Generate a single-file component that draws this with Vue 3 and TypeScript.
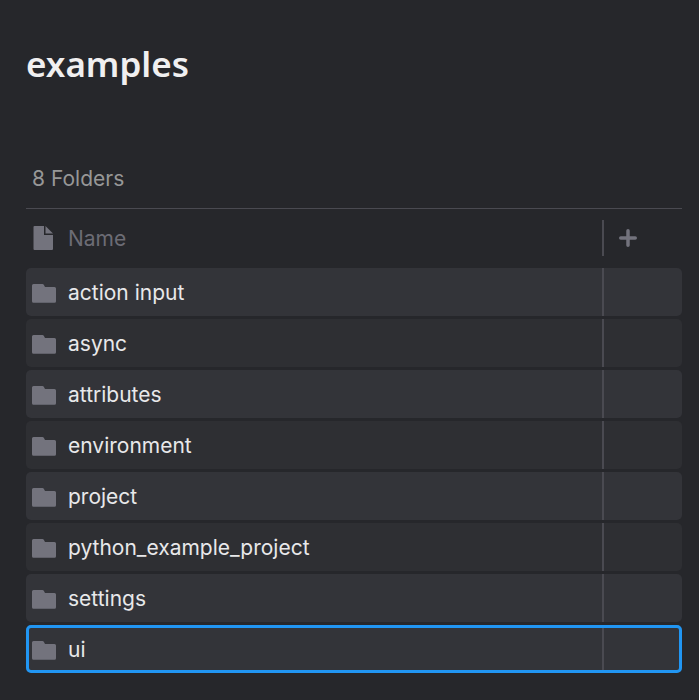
<script setup lang="ts">
import { computed, ref } from 'vue'

const title = 'examples'
const folders: string[] = [
  'action input',
  'async',
  'attributes',
  'environment',
  'project',
  'python_example_project',
  'settings',
  'ui',
]
const selected = ref('ui')
const summary = computed(() => `${folders.length} Folders`)
</script>

<template>
  <main class="page">
    <h1 class="title">{{ title }}</h1>
    <p class="summary">{{ summary }}</p>
    <table class="folders">
      <thead>
        <tr>
          <th scope="col" class="name-head">
            <div class="entry">
              <svg class="icon" viewBox="0 0 24 24" aria-hidden="true">
                <path d="M2.5 0H12V9H21V23Q21 24 20 24H2.5Q1.5 24 1.5 23V1Q1.5 0 2.5 0Z" />
                <path d="M13.5 0L21 7.5H13.5Z" />
              </svg>
              <span class="label">Name</span>
            </div>
          </th>
          <th class="add-head">
            <div class="add-cell">
              <button type="button" class="add" aria-label="Add column">
                <svg class="plus" viewBox="0 0 18 18" aria-hidden="true">
                  <path d="M9 1.75V16.25M1.75 9H16.25" />
                </svg>
              </button>
            </div>
          </th>
        </tr>
      </thead>
      <tbody>
        <tr
          v-for="name in folders"
          :key="name"
          :class="{ selected: name === selected }"
          @click="selected = name"
        >
          <td class="name">
            <a class="entry" href="#" @click.prevent>
              <svg class="icon" viewBox="0 0 24 24" aria-hidden="true">
                <path d="M1.5 4H10.5Q11.3 4 11.8 4.8L13 7H22.5Q24 7 24 8.5V21.3Q24 22.8 22.5 22.8H1.5Q0 22.8 0 21.3V5.5Q0 4 1.5 4Z" />
              </svg>
              <span class="label">{{ name }}</span>
            </a>
          </td>
          <td class="extra"></td>
        </tr>
      </tbody>
    </table>
  </main>
</template>

<style>
body {
  background: #26272b;
}
</style>

<style scoped>
.page {
  padding: 40px 17px 24px 26px;
  font-family: Inter, 'Liberation Sans', sans-serif;
  font-size: 21px;
  line-height: 28px;
  color: #e8e8ea;
}
.title {
  margin: 0;
  font-family: 'Noto Sans', sans-serif;
  font-size: 35px;
  font-weight: 600;
  line-height: 48px;
  color: #f0eff0;
}
.summary {
  margin: 77px 0 0;
  padding: 0 6px 15px;
  border-bottom: 1px solid #4a4a51;
  color: #979797;
}
.folders {
  width: 100%;
  table-layout: fixed;
  border-collapse: separate;
  border-spacing: 0 3px;
}
th,
td {
  padding: 0;
  text-align: left;
}
.name-head {
  padding: 8px 0 9px;
  font-weight: 400;
  color: #6c6c75;
}
.add-head {
  width: 80px;
  padding: 8px 0 9px;
}
.entry {
  display: flex;
  align-items: center;
  gap: 12px;
  padding: 0 6px;
  color: inherit;
  text-decoration: none;
}
.label {
  padding-top: 2px;
}
.icon {
  flex: none;
  width: 24px;
  height: 24px;
  fill: #73737d;
}
.add-cell {
  display: flex;
  align-items: center;
  height: 36px;
  padding-left: 15px;
  border-left: 2px solid #4a4a51;
}
.add {
  display: flex;
  padding: 0;
  border: 0;
  background: none;
  cursor: pointer;
}
.plus {
  width: 18px;
  height: 18px;
  fill: none;
  stroke: #73737d;
  stroke-width: 3.5;
  stroke-linecap: round;
}
td {
  height: 48px;
  background: #2e2f33;
}
tbody tr:nth-child(odd) td,
tbody .selected td {
  background: #333439;
}
tbody tr {
  border-radius: 5px;
}
.name {
  border-radius: 5px 0 0 5px;
}
.extra {
  border-left: 2px solid #4a4a51;
  border-radius: 0 5px 5px 0;
}
.selected {
  outline: 3px solid #2196f3;
  outline-offset: -3px;
}
</style>
